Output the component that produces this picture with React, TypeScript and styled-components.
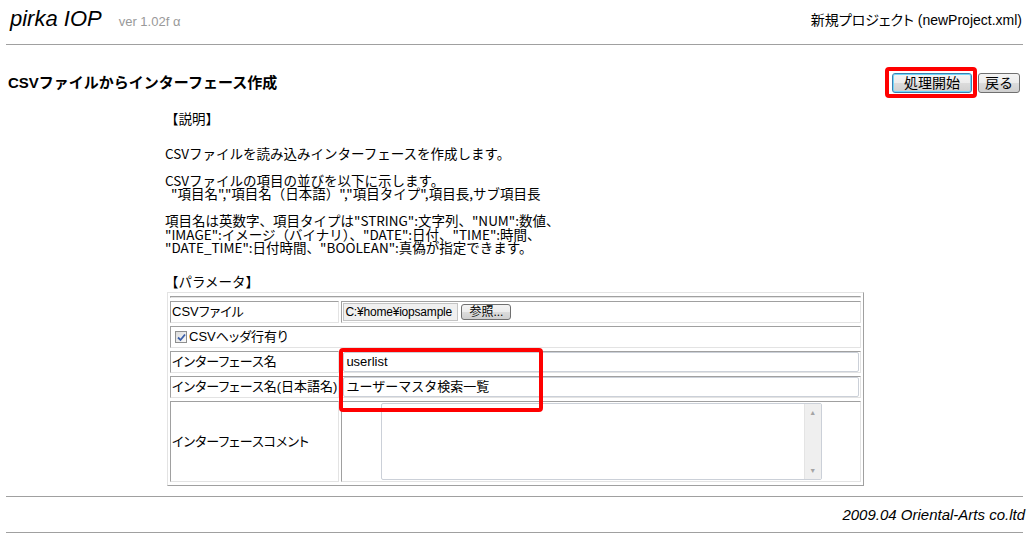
import React from 'react';
import styled, { createGlobalStyle, css } from 'styled-components';

const GlobalStyle = createGlobalStyle`
  html,
  body {
    margin: 0;
    padding: 0;
    background: #fff;
  }

  body {
    font-family: "Liberation Sans", "Noto Sans CJK JP", sans-serif;
    color: #000;
  }
`;

const Page = styled.div`
  width: 1031px;
  height: 540px;
  overflow: hidden;
`;

const Header = styled.header`
  display: flex;
  justify-content: space-between;
  align-items: center;

  box-sizing: border-box;
  height: 44px;
  padding: 0 9px 6px 10px;
`;

const Brand = styled.div`
  display: flex;
  align-items: baseline;
  gap: 17px;
`;

const Logo = styled.span`
  font-size: 22px;
  font-style: italic;
  line-height: 1;
`;

const Version = styled.span`
  font-size: 13px;
  color: #999;
`;

const ProjectName = styled.span`
  font-size: 14px;
  font-feature-settings: 'palt';
`;

const Rule = styled.div`
  height: 1px;
  margin: 0 8px 0 6px;

  background: #a0a0a0;
`;

const TitleBar = styled.div`
  display: flex;
  justify-content: space-between;
  align-items: center;

  height: 20px;
  margin-top: 28px;
  padding: 0 11px 0 8px;
`;

const Title = styled.h1`
  margin: 0;

  font-size: 15px;
  font-weight: bold;
  line-height: 20px;
`;

const Actions = styled.div`
  display: flex;
  gap: 6px;
`;

const ButtonWrap = styled.span`
  position: relative;
  display: inline-flex;
`;

const Highlight = styled.span`
  position: absolute;

  border: 4px solid #ff0000;
  border-radius: 4px;

  pointer-events: none;
`;

const ActionButton = styled.button<{ $primary?: boolean }>`
  box-sizing: border-box;
  height: 20px;
  padding: 0 11px;

  font-family: "Liberation Sans", "Noto Sans CJK JP", sans-serif;
  font-size: 14px;
  line-height: 18px;
  color: #000;

  background: linear-gradient(#f4f4f4, #ececec 50%, #dcdcdc 50%, #cfcfcf);
  border: 1px solid #707070;
  border-radius: 3px;

  ${(props) =>
    props.$primary &&
    css`
      border-color: #3c7fb1;
      box-shadow: inset 0 0 0 1px #6fd6f8;
    `}
`;

const Section = styled.section`
  padding-left: 165px;
`;

const MonoText = styled.div`
  font-family: "Noto Sans CJK JP", sans-serif;
  font-size: 13.5px;
  line-height: 13.5px;
  white-space: pre;
`;

const Caption = styled(MonoText)<{ $gap: number }>`
  margin-top: ${(props) => props.$gap}px;
`;

const Explanation = styled(MonoText)`
  margin-top: 21px;
`;

const FormWrap = styled.div`
  position: relative;

  width: 697px;
  margin: 4px 0 0 2px;
`;

const FormTable = styled.table`
  width: 697px;

  border-collapse: separate;
  border-spacing: 2px 3px;
  border: 1px solid;
  border-color: #e3e3e3 #a0a0a0 #a0a0a0 #e3e3e3;

  font-size: 13px;
  font-feature-settings: 'palt';
`;

const Cell = styled.td<{ $label?: boolean; $height?: number }>`
  box-sizing: content-box;
  height: ${(props) => props.$height ?? 20}px;
  padding: 0 1px;

  border: 1px solid;
  border-color: #a0a0a0 #e3e3e3 #e3e3e3 #a0a0a0;

  line-height: 16px;
  white-space: nowrap;
  vertical-align: middle;

  ${(props) =>
    props.$label &&
    css`
      width: 164px;
    `}
`;

const SpacerCell = styled.td`
  height: 0;
  padding: 0;

  border: 1px solid;
  border-color: #a0a0a0 #e3e3e3 #e3e3e3 #a0a0a0;

  font-size: 0;
  line-height: 0;
`;

const FileRow = styled.div`
  display: flex;
  align-items: center;
  gap: 3px;
`;

const FilePath = styled.div`
  box-sizing: border-box;
  width: 115px;
  height: 18px;
  padding: 0 1px;

  font-size: 12px;
  letter-spacing: -0.2px;
  line-height: 16px;
  white-space: nowrap;
  overflow: hidden;

  background: #f0f0f0;
  border: 1px solid #c4c4c4;
`;

const BrowseButton = styled.button`
  box-sizing: border-box;
  width: 50px;
  height: 16px;
  padding: 0;

  font-family: "Liberation Sans", "Noto Sans CJK JP", sans-serif;
  font-size: 12px;
  line-height: 14px;
  color: #000;

  background: linear-gradient(#f4f4f4, #ececec 50%, #dcdcdc 50%, #cfcfcf);
  border: 1px solid #707070;
  border-radius: 3px;
`;

const CheckLabel = styled.label`
  display: flex;
  align-items: center;
  gap: 2px;

  padding-left: 3px;
`;

const CheckBox = styled.span`
  display: inline-flex;
  align-items: center;
  justify-content: center;

  box-sizing: border-box;
  width: 12px;
  height: 12px;

  background: linear-gradient(135deg, #dcdcdc, #fafafa);
  border: 1px solid #8e8f8f;
`;

const TextInput = styled.div`
  box-sizing: border-box;
  width: 100%;
  height: 20px;
  padding: 0 2px;

  font-size: 13px;
  font-feature-settings: normal;
  line-height: 18px;

  border: 1px solid #cbd0d8;
  border-radius: 2px;
`;

const TextArea = styled.div`
  display: flex;

  box-sizing: border-box;
  width: 441px;
  height: 77px;
  margin: 0 auto;

  border: 1px solid #cbd0d8;
  border-radius: 2px;
`;

const TextAreaBody = styled.div`
  flex: 1;
`;

const ScrollTrack = styled.div`
  display: flex;
  flex-direction: column;
  justify-content: space-between;
  align-items: center;

  width: 16px;
  padding: 5px 0;

  background: #efefef;
  border-left: 1px solid #e4e4e4;

  font-size: 7px;
  line-height: 7px;
  color: #a4a4a4;
`;

const Footer = styled.footer`
  display: flex;
  justify-content: flex-end;
  align-items: center;

  height: 35px;
  padding-right: 6px;

  font-size: 15px;
  font-style: italic;
`;

const rows = [
  { label: 'インターフェース名', value: 'userlist' },
  { label: 'インターフェース名(日本語名)', value: 'ユーザーマスタ検索一覧' },
];

const explanation = [
  'CSVファイルを読み込みインターフェースを作成します。',
  '',
  'CSVファイルの項目の並びを以下に示します。',
  '  "項目名","項目名（日本語）","項目タイプ",項目長,サブ項目長',
  '',
  '項目名は英数字、項目タイプは"STRING":文字列、"NUM":数値、',
  '"IMAGE":イメージ（バイナリ）、"DATE":日付、"TIME":時間、',
  '"DATE_TIME":日付時間、"BOOLEAN":真偽が指定できます。',
].join('\n');

export default function App() {
  return (
    <Page>
      <GlobalStyle />

      <Header>
        <Brand>
          <Logo>pirka IOP</Logo>
          <Version>ver 1.02f α</Version>
        </Brand>
        <ProjectName>新規プロジェクト (newProject.xml)</ProjectName>
      </Header>
      <Rule />

      <TitleBar>
        <Title>CSVファイルからインターフェース作成</Title>
        <Actions>
          <ButtonWrap>
            <ActionButton $primary>処理開始</ActionButton>
            <Highlight style={{ top: -6, left: -7, right: -5, bottom: -5 }} />
          </ButtonWrap>
          <ActionButton style={{ padding: '0 6px' }}>戻る</ActionButton>
        </Actions>
      </TitleBar>

      <Section>
        <Caption $gap={19}>【説明】</Caption>
        <Explanation>{explanation}</Explanation>

        <Caption $gap={20}>【パラメータ】</Caption>

        <FormWrap>
          <FormTable>
            <tbody>
              <tr>
                <SpacerCell colSpan={2} />
              </tr>
              <tr>
                <Cell $label>CSVファイル</Cell>
                <Cell>
                  <FileRow>
                    <FilePath>C:¥home¥iopsample</FilePath>
                    <BrowseButton>参照...</BrowseButton>
                  </FileRow>
                </Cell>
              </tr>
              <tr>
                <Cell colSpan={2}>
                  <CheckLabel>
                    <CheckBox>
                      <svg width="9" height="9" viewBox="0 0 9 9">
                        <path
                          d="M1 4.5 L3.5 7 L8 1.5"
                          fill="none"
                          stroke="#3b5fa8"
                          strokeWidth="1.8"
                        />
                      </svg>
                    </CheckBox>
                    CSVヘッダ行有り
                  </CheckLabel>
                </Cell>
              </tr>
              {rows.map((row) => (
                <tr key={row.label}>
                  <Cell $label>{row.label}</Cell>
                  <Cell>
                    <TextInput>{row.value}</TextInput>
                  </Cell>
                </tr>
              ))}
              <tr>
                <Cell $label $height={79}>
                  インターフェースコメント
                </Cell>
                <Cell $height={79}>
                  <TextArea>
                    <TextAreaBody />
                    <ScrollTrack>
                      <span>▲</span>
                      <span>▼</span>
                    </ScrollTrack>
                  </TextArea>
                </Cell>
              </tr>
            </tbody>
          </FormTable>
          <Highlight style={{ left: 172, top: 56, width: 196, height: 56 }} />
        </FormWrap>
      </Section>

      <Rule style={{ marginTop: 10 }} />
      <Footer>2009.04 Oriental-Arts co.ltd</Footer>
      <Rule />
    </Page>
  );
}
